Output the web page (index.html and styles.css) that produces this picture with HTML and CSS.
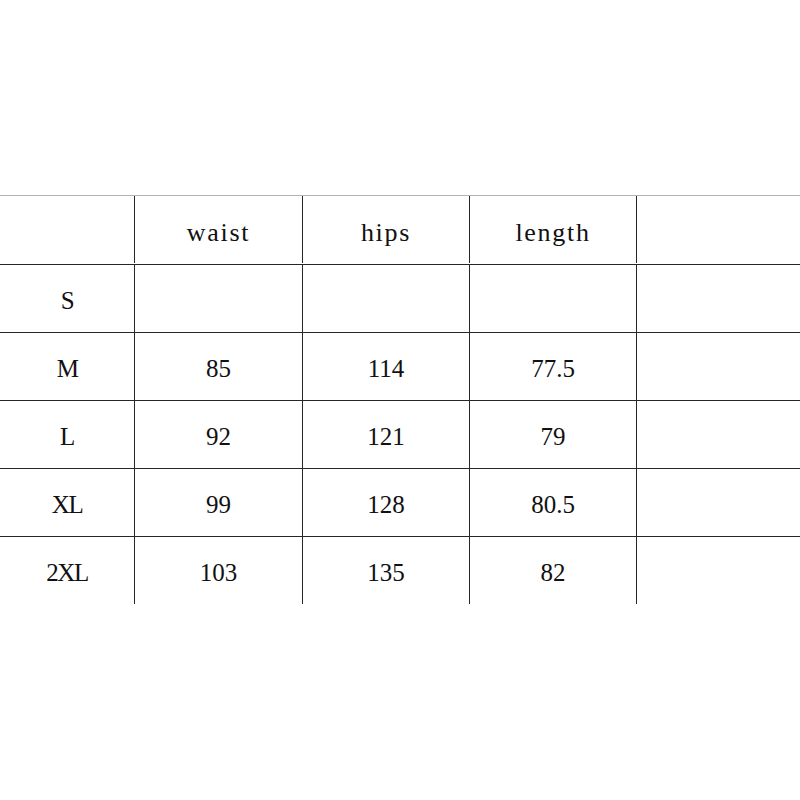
FILE: index.html
```html
<!DOCTYPE html>
<html>
<head>
<meta charset="utf-8">
<link rel="stylesheet" href="styles.css">
</head>
<body>
<div class="page">
  <div class="chart">
    <div class="cell head"></div>
    <div class="cell head word">waist</div>
    <div class="cell head word">hips</div>
    <div class="cell head word">length</div>
    <div class="cell head"></div>

    <div class="cell size">S</div>
    <div class="cell"></div>
    <div class="cell"></div>
    <div class="cell"></div>
    <div class="cell"></div>

    <div class="cell size">M</div>
    <div class="cell num">85</div>
    <div class="cell num">114</div>
    <div class="cell num">77.5</div>
    <div class="cell"></div>

    <div class="cell size">L</div>
    <div class="cell num">92</div>
    <div class="cell num">121</div>
    <div class="cell num">79</div>
    <div class="cell"></div>

    <div class="cell size">XL</div>
    <div class="cell num">99</div>
    <div class="cell num">128</div>
    <div class="cell num">80.5</div>
    <div class="cell"></div>

    <div class="cell size">2XL</div>
    <div class="cell num">103</div>
    <div class="cell num">135</div>
    <div class="cell num">82</div>
    <div class="cell"></div>
  </div>
</div>
</body>
</html>
```

FILE: styles.css
```css
html, body {
  margin: 0;
  padding: 0;
  background: #ffffff;
}

.page {
  width: 800px;
  height: 800px;
  padding-top: 195px;
  box-sizing: border-box;
  overflow: hidden;
}

.chart {
  display: grid;
  grid-template-columns: 134px 168px 167px 167px 164px;
  grid-auto-rows: 68px;
  border-top: 1px solid #b4b4b4;
  color: #111111;
  font-family: "Liberation Serif", "Times New Roman", serif;
  font-size: 25px;
}

.cell {
  display: flex;
  align-items: center;
  justify-content: center;
  border-left: 1px solid #262626;
  border-top: 1px solid #262626;
  box-sizing: border-box;
}

.cell:nth-child(5n+1) {
  border-left: none;
}

.cell.head {
  border-top: none;
  height: 67px;
}

.word {
  font-size: 26px;
  letter-spacing: 1.7px;
  padding-top: 6px;
}

.size {
  letter-spacing: -1.5px;
  padding-top: 4px;
}

.num {
  padding-top: 4px;
}
```
